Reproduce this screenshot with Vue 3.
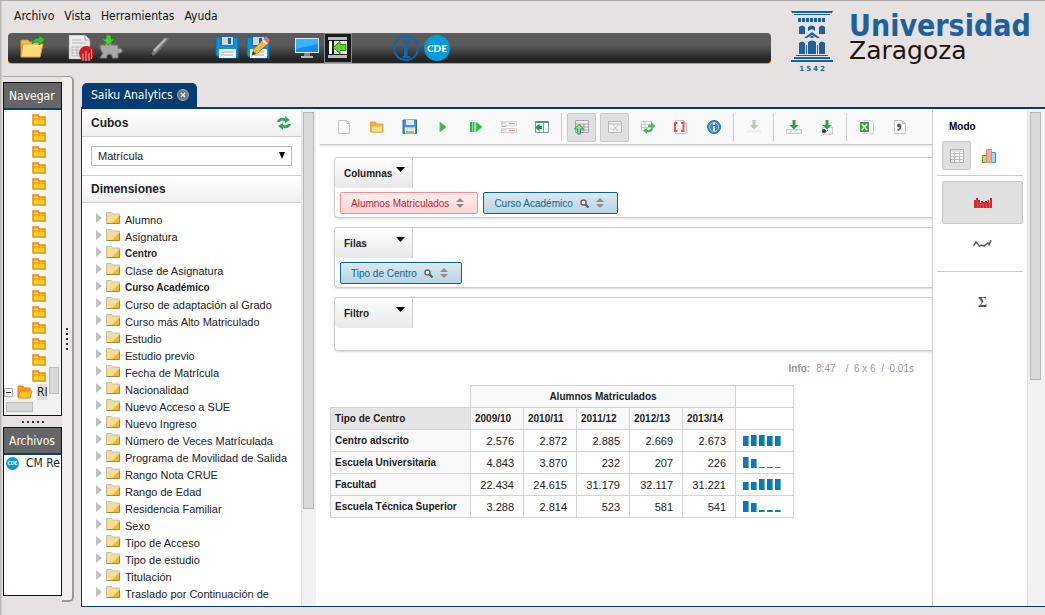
<script setup>
import { ref } from "vue";

const menus = ["Archivo", "Vista", "Herramientas", "Ayuda"];

// markup of every icon, drawn inside the viewBox given in each button
const floppy = `<path d="M2 2h20a1 1 0 0 1 1 1v20H4l-3-3V3z" fill="#0d93dc" stroke="#0569aa"/><path d="M5 2h14v9H5z" fill="#2f6f9c"/><path d="M7 2h11v8H7z" fill="#cfd6dc"/><path d="M13 3h3v6h-3z" fill="#275f8c"/><path d="M4 14h17v9H4z" fill="#f6f6f6"/><path d="M6 17h12M6 20h12" stroke="#aaa"/>`;
const sheet = `<path d="M2.500 1.500h8l3 3v10h-11z" fill="#fdfdfd" stroke="#c4c4c4"/><path d="M10.500 1.500v3h3" fill="none" stroke="#c4c4c4"/>`;
const down = `<path d="M6.500 1h3v5h3L8 10.500 3.500 6h3z" fill="#2f9e4b"/>`;

const icons = {
  open: `<path d="M1 21V5h7l2 2h9v4" fill="#f0c050" stroke="#c8932a"/><path d="M1 22 3 9h20l-3 13z" fill="#fbdc7d" stroke="#d9a63c"/><path d="M12 9c1-5 4-6 7-6V0l6 5-6 5V7c-3 0-5 0-7 2z" fill="#35c335" stroke="#0f7d16" stroke-width=".7"/>`,
  report: `<path d="M1 0h16l5 5v19H1z" fill="#ececec" stroke="#999" stroke-width=".6"/><path d="M17 0v5h5" fill="#fff" stroke="#999"/><path d="M4 5h9M4 8h14M4 12h14M4 15h14M4 18h14M4 21h14M4 12v9M9 12v9" stroke="#b5b5b5"/><circle cx="18.500" cy="18.500" r="7.500" fill="#cf1b1f"/><path d="M15 26v-7M18 26V16M21 26v-8M23.500 24V14" stroke="#e9e0e0" stroke-width=".8"/>`,
  puzzle: `<path d="M1 10h6c-2-4 7-4 5 0h7v4c4-3 7 5 0 4v5h-6c2-5-7-5-5 0H1l3-5c-2-2-3-4-3-8z" fill="#a8a8a8" stroke="#777"/><path d="M7 0h5v4h4l-6.500 6L3 4h4z" fill="#4bd22d" stroke="#16860e" stroke-width=".8"/>`,
  pencil: `<path d="M3 23 6 15 18 3q3-2 4 1L10 18z" fill="#777"/><path d="M6 15 18 3l2 1L8 17z" fill="#b5b5b5"/><path d="M3 23l1-4 2 2z" fill="#222"/>`,
  save: floppy,
  saveAs: floppy + `<path d="m6 20 2-6L19 3l4 4-11 11z" fill="#f5b83a" stroke="#b57816" stroke-width=".7"/><path d="m17 5 3-4 4 4-3 4z" fill="#ef6c6c"/><path d="m17 5 4 4" stroke="#dcefdc" stroke-width="2"/><path d="m6 20 1-4 3 3z" fill="#4a3017"/>`,
  monitor: `<path d="M1 3h24v15H1z" fill="#d4e6f4"/><path d="M2 4h22v13H2z" fill="#188bf0"/><path d="M2 4h22v5L2 14z" fill="#36b2ff"/><path d="M10 18h6v3h-6z" fill="#888"/><path d="M7 21h12v2H7z" fill="#bbb"/>`,
  panel: `<path d="M3 2h19v3H3zM3 20h19v3H3z" fill="#bbb"/><path d="M4 6h3v13H4z" fill="#fff"/><path d="M9 6h13v13H9z" fill="#f1f1f1"/><path d="m8 12.500 7-6v3h6v6h-6v3z" fill="#69d021" stroke="#2d8a10"/>`,
  info: `<circle cx="13" cy="13" r="12" fill="none" stroke="#0a6bb5" stroke-width="2"/><circle cx="13" cy="7" r="2.800" fill="#0a6bb5"/><path d="M9.500 11h5v10H17v2H9.500v-2H11v-8H9.500z" fill="#0a6bb5"/>`,
  cde: `<circle cx="13" cy="13" r="13" fill="#069bdb"/><text x="13" y="16.500" text-anchor="middle" font-family="Lato, sans-serif" font-size="10" font-weight="900" fill="#fff">CDE</text>`,

  blank: sheet,
  folder: `<path d="M1.500 13V3h5l1.500 2h6v8z" fill="#f6b13a" stroke="#eaa43a"/><path d="M3 7h10.500v6H2z" fill="#fde08a" stroke="#f0b040"/>`,
  disk: `<path d="M1 1h13.500v13.500H1z" fill="#4f8fd8" stroke="#2e68ad"/><path d="M4 1h8v5H4z" fill="#dbe9f8"/><path d="M3 8.500h10v6H3z" fill="#fff"/><path d="M4 10h8" stroke="#bbb"/><path d="M4 13h8" stroke="#8ccf62" stroke-width="2"/>`,
  run: `<path d="M5 3v10l6-5z" fill="#2fb550" stroke="#57cb70"/>`,
  runAll: `<path d="M3 3v10M5.500 3v10" stroke="#2fb550" stroke-width="2"/><path d="M8 3v10l6-5z" fill="#2fb550" stroke="#57cb70"/>`,
  fields: `<path d="M.5 2.500h15v4H.500zM.5 9.500h15v4H.500z" fill="#f5f5f5" stroke="#d5d5d5"/><path d="M1 4h4M1 7.500h4M1 11h4" stroke="#bbb"/><path d="M8 4.500h6" stroke="#82b5dc"/><path d="M8 11.500h6" stroke="#ee8c8c"/>`,
  toggle: `<path d="M1.500 2.500h13v11h-13z" fill="#fff" stroke="#6a9cc8"/><path d="M1.500 3h13" stroke="#4f88c0" stroke-width="2"/><path d="M9.500 3v10" stroke="#6a9cc8"/><path d="M1 8.500 5.500 4.500v2.500h2.500v3H5.500v2.500z" fill="#229a46"/>`,
  hideParents: `<path d="M1.500 1.500h13v12h-13zM1.500 5h13M1.500 8h13M1.500 11h13M6 5v9M10 5v9" fill="#eee" stroke="#a5a5a5"/><path d="M3.500 15V10H.500L5 5.500 9.500 10h-3v5z" fill="#9bd7ac" stroke="#2f9a50"/>`,
  nonEmpty: `<path d="M1.500 2.500h13v11h-13z" fill="#f3f3f3" stroke="#b5b5b5"/><path d="M1.500 5h13" stroke="#b5b5b5"/><path d="m6 6 5 6M11 6l-5 6" stroke="#bbb"/>`,
  swap: `<path d="M1.500 2.500h10v9h-10zM1.500 5.500h10M1.500 8.500h10M5 2.500v9" fill="#f4f4f4" stroke="#ccc"/><path d="M8 6h3V3l4.500 4L13 9c0 4-3 5-6 4v2l-4-3.500L7 9v2c3 0 4-1 4-3H8z" fill="#45b865"/>`,
  mdx: sheet + `<path d="M4.500 4H2v8h2.500M8 4h2.500v8H8" fill="none" stroke="#f05252" stroke-width="2"/>`,
  about: `<circle cx="8" cy="8" r="6.500" fill="#3a87ca" stroke="#2a6fae"/><circle cx="8" cy="8" r="4.500" fill="none" stroke="#9cc7ec"/><path d="M8 4v2M8 7v5" stroke="#fff" stroke-width="2"/>`,
  drill: `<g opacity=".4">${down}<path d="M1 11h14v3H1z" fill="#e2e2e2"/></g>`,
  drillDown: `<path d="M.5 10.500h15v4H.500zM5 10.500v4M10 10.500v4" fill="#f2f2f2" stroke="#ccc"/>` + down,
  drillCsv: `<path d="M3.500 8.500h10v7h-10z" fill="#fafafa" stroke="#ccc"/><circle cx="5" cy="12" r="2" fill="#333"/><path d="m5 14 4-3" stroke="#555"/>` + down,
  xls: `<path d="M5.500 1.500h7l2 2v11h-9z" fill="#fff" stroke="#ccc"/><path d="M1 3h9v10H1z" fill="#3d9b4b"/><path d="m3 5 5 6M8 5l-5 6" stroke="#e6f5e6" stroke-width="1.500"/>`,
  csv: sheet + `<circle cx="7" cy="6.500" r="2" fill="#555"/><path d="M8.500 6.500q1 3-3 5" fill="none" stroke="#555" stroke-width="1.500"/>`,

  table: `<path d="M1.500 1.500h13v13h-13z" fill="#fff" stroke="#b0b0b0"/><path d="M1 3h14M2 5.500h12M2 8.500h12M2 11.500h12M5.500 4v10M10.500 4v10" stroke="#bdbdbd"/>`,
  chart: `<path d="M1.500 7.500h4v7h-4z" fill="#b8e06a" stroke="#5fa51b"/><path d="M10.500 4.500h4v10h-4z" fill="#9bdcf7" stroke="#28a0d5"/><path d="M5.500 1.500h5v13h-5z" fill="#f9aaa5" stroke="#ec7f78"/>`,
};

const mainTools = [
  { icons: ["open"] },
  { icons: ["report", "puzzle"] },
  { icons: ["pencil"] },
  { icons: ["save", "saveAs"], wide: true },
  { icons: ["monitor", "panel"] },
  { icons: ["info", "cde"], wide: true },
];

const queryTools = [
  ["blank", "folder", "disk", "run", "runAll", "fields", "toggle"],
  ["hideParents", "nonEmpty", "swap", "mdx", "about"],
  ["drill"],
  ["drillDown", "drillCsv"],
  ["xls", "csv"],
];
const pressed = ref(["hideParents", "nonEmpty"]);

function toggle(name) {
  if (pressed.value.includes(name)) {
    pressed.value = pressed.value.filter((n) => n !== name);
  } else {
    pressed.value.push(name);
  }
}

const cube = ref("Matrícula");
const mode = ref("table");

const dimensions = [
  "Alumno", "Asignatura", "Centro", "Clase de Asignatura", "Curso Académico",
  "Curso de adaptación al Grado", "Curso más Alto Matriculado", "Estudio",
  "Estudio previo", "Fecha de Matrícula", "Nacionalidad", "Nuevo Acceso a SUE",
  "Nuevo Ingreso", "Número de Veces Matrículada", "Programa de Movilidad de Salida",
  "Rango Nota CRUE", "Rango de Edad", "Residencia Familiar", "Sexo",
  "Tipo de Acceso", "Tipo de estudio", "Titulación", "Traslado por Continuación de",
];
const used = ["Centro", "Curso Académico"];

const axes = [
  {
    name: "Columnas",
    chips: [
      { text: "Alumnos Matriculados", measure: true },
      { text: "Curso Académico" },
    ],
  },
  { name: "Filas", chips: [{ text: "Tipo de Centro" }] },
  { name: "Filtro", chips: [] },
];

const years = ["2009/10", "2010/11", "2011/12", "2012/13", "2013/14"];
const rows = [
  { name: "Centro adscrito", values: [2576, 2872, 2885, 2669, 2673] },
  { name: "Escuela Universitaria", values: [4843, 3870, 232, 207, 226] },
  { name: "Facultad", values: [22434, 24615, 31179, 32117, 31221] },
  { name: "Escuela Técnica Superior", values: [3288, 2814, 523, 581, 541] },
];

function format(n) {
  return String(n).replace(/\B(?=(\d{3})+$)/g, ".");
}

function bars(values) {
  const max = Math.max(...values);
  return values.map((v) => Math.max(1, Math.round((v / max) * 11)));
}
</script>

<template>
  <div class="page">
    <header class="top">
      <div class="top-left">
        <nav class="menu">
          <button v-for="m in menus" :key="m">{{ m }}</button>
        </nav>
        <div class="main-tools">
          <div v-for="(g, i) in mainTools" :key="i" class="tool-group" :class="{ wide: g.wide }">
            <button v-for="n in g.icons" :key="n" :class="{ on: n === 'panel' }" :aria-label="n">
              <svg width="26" height="26" viewBox="0 0 26 26" v-html="icons[n]"></svg>
            </button>
          </div>
        </div>
      </div>
      <div class="brand">
        <div class="seal">
          <svg width="42" height="52" viewBox="0 0 42 52" fill="#1c609e">
            <path d="M0 0h42l-1 2H1zM3 3h36v1H3z" />
            <path d="M7 7h3v4H7zM11 7h3v4h-3zM15 7h3v4h-3zM19 7h3v4h-3zM23 7h3v4h-3zM27 7h3v4h-3zM31 7h3v4h-3z" />
            <path d="M8 23v-7q3-3 6 0v7zM17 20v-4q4-3 7 0v4l-3-2zM28 23v-7q3-3 6 0v7z" />
            <path d="m13 27 8-6 8 6h-3l-5-3-5 3zM19.500 25h3v2h-3z" />
            <path d="M8 43V32q3-3 6 0v11zM17 43V31q4-3 8 0v12zM28 43V32q3-3 6 0v11z" />
            <path d="M15 43V34h1v9zM26 43V34h1v9z" />
            <path d="M5 44h32v1H5zM3 46h36v2H3zM0 49h42v2H0z" />
          </svg>
          <span class="year"><i v-for="d in '1542'" :key="d">{{ d }}</i></span>
        </div>
        <div class="brand-name">
          <strong>Universidad</strong>
          <span>Zaragoza</span>
        </div>
      </div>
    </header>

    <div class="body">
      <aside class="side">
        <div class="side-boxes">
          <section class="box">
            <h2>Navegar</h2>
            <div class="repo">
              <ul>
                <li v-for="n in 17" :key="n">
                  <svg width="14" height="14" viewBox="0 0 14 14">
                    <path d="M1 12V2h5l1 2h6v8z" fill="#ffd51c" stroke="#f58413" stroke-width="1.500" />
                    <path d="M2 6h10" stroke="#f58413" />
                  </svg>
                </li>
                <li class="last">
                  <svg width="9" height="9" viewBox="0 0 9 9">
                    <path d="M.5.500h8v8h-8z" fill="#fff" stroke="#aaa" />
                    <path d="M2 4.500h5" stroke="#333" />
                  </svg>
                  <svg width="16" height="14" viewBox="0 0 16 14">
                    <path d="M1 12V1h5l1 2h6v3" fill="#f89a1e" stroke="#ee7a10" />
                    <path d="m1 13 2-7h12l-2 7z" fill="#ffc829" stroke="#ee7a10" />
                  </svg>
                  <span>RI</span>
                </li>
              </ul>
              <div class="track"><i></i></div>
            </div>
            <div class="hscroll"><i></i></div>
          </section>
          <div class="grip"><i v-for="n in 5" :key="n"></i></div>
          <section class="box files">
            <h2>Archivos</h2>
            <a href="#">
              <svg width="13" height="13" viewBox="0 0 26 26" v-html="icons.cde"></svg>
              CM Re
            </a>
          </section>
        </div>
        <div class="splitter"><i v-for="n in 5" :key="n"></i></div>
      </aside>

      <main class="main">
        <div class="tab">
          Saiku Analytics
          <button aria-label="Cerrar">
            <svg width="12" height="12" viewBox="0 0 12 12">
              <circle cx="6" cy="6" r="5.500" fill="#6f7884" stroke="#a2a9b4" />
              <path d="m4 4 4 4M8 4 4 8" stroke="#fff" stroke-width="1.500" />
            </svg>
          </button>
        </div>

        <div class="panel">
          <div class="cubes">
            <h3>
              <label for="cube">Cubos</label>
              <button aria-label="Actualizar">
                <svg width="16" height="14" viewBox="0 0 16 14" fill="#35a862">
                  <path d="M1 6q1-5 8-4V0l5 4-5 3V5Q5 4 4 6z" />
                  <path d="M15 8q-1 5-8 4v2l-5-4 5-3v2q4 1 5-1z" />
                </svg>
              </button>
            </h3>
            <div class="cube-select">
              <select id="cube" v-model="cube">
                <option>Matrícula</option>
              </select>
              <svg width="6" height="7" viewBox="0 0 6 7"><path d="M0 0h6L3 7z" /></svg>
            </div>
            <h3>Dimensiones</h3>
            <ul class="tree">
              <li v-for="d in dimensions" :key="d" :class="{ used: used.includes(d) }">
                <svg width="6" height="10" viewBox="0 0 6 10"><path d="M0 0v10l6-5z" fill="#c0c0c0" /></svg>
                <svg width="14" height="12" viewBox="0 0 14 12">
                  <path d="M.5 11V.500h5l1 1.500h7v9z" fill="#e8dcb8" stroke="#cdbf95" />
                  <path d="M1 4h12v7H1z" fill="#f9dd8c" />
                  <path d="M6 11 13 4v7z" fill="#f3b62e" />
                  <path d="M.5 11.500h13V4" fill="none" stroke="#a98733" />
                </svg>
                <span>{{ d }}</span>
              </li>
            </ul>
          </div>
          <div class="scroll cubes-scroll"><i></i></div>

          <div class="work">
            <div class="query-tools">
              <template v-for="(g, i) in queryTools" :key="i">
                <span v-if="i" class="sep"></span>
                <button
                  v-for="n in g"
                  :key="n"
                  :class="{ on: pressed.includes(n) }"
                  :aria-label="n"
                  @click="toggle(n)"
                >
                  <svg width="16" height="16" viewBox="0 0 16 16" v-html="icons[n]"></svg>
                </button>
              </template>
            </div>

            <div class="axes">
              <section v-for="a in axes" :key="a.name" class="axis">
                <button class="axis-tab">
                  {{ a.name }}
                  <svg width="9" height="5" viewBox="0 0 9 5"><path d="M0 0h9L4.500 5z" /></svg>
                </button>
                <div class="chips">
                  <button v-for="c in a.chips" :key="c.text" class="chip" :class="{ measure: c.measure }">
                    {{ c.text }}
                    <svg v-if="!c.measure" width="9" height="9" viewBox="0 0 9 9">
                      <circle cx="3.500" cy="3.500" r="2.500" fill="#fff" stroke="#666" stroke-width="1.500" />
                      <path d="m5.500 5.500 3 3" stroke="#555" stroke-width="2" />
                    </svg>
                    <svg width="8" height="10" viewBox="0 0 8 10" fill="#8c8c8c"><path d="M0 4h8L4 0zM0 6h8l-4 4z" /></svg>
                  </button>
                </div>
              </section>
            </div>

            <p class="info"><b>Info:</b><span>8:47</span><span>/&nbsp; 6 x 6 &nbsp;/&nbsp; 0.01s</span></p>

            <table>
              <colgroup>
                <col class="col-name">
                <col v-for="y in years" :key="y">
                <col class="col-spark">
              </colgroup>
              <thead>
                <tr>
                  <td class="none"></td>
                  <th colspan="5" class="measure-name">Alumnos Matriculados</th>
                  <td></td>
                </tr>
                <tr>
                  <th class="corner">Tipo de Centro</th>
                  <th v-for="y in years" :key="y">{{ y }}</th>
                  <td></td>
                </tr>
              </thead>
              <tbody>
                <tr v-for="r in rows" :key="r.name">
                  <th>{{ r.name }}</th>
                  <td v-for="(v, i) in r.values" :key="i">{{ format(v) }}</td>
                  <td class="spark">
                    <div><i v-for="(h, i) in bars(r.values)" :key="i" :style="{ height: h + 'px' }"></i></div>
                  </td>
                </tr>
              </tbody>
            </table>
          </div>

          <div class="modes">
            <h4>Modo</h4>
            <div class="mode-row">
              <button :class="{ on: mode === 'table' }" aria-label="Tabla" @click="mode = 'table'">
                <svg width="16" height="16" viewBox="0 0 16 16" v-html="icons.table"></svg>
              </button>
              <button :class="{ on: mode === 'chart' }" aria-label="Gráfico" @click="mode = 'chart'">
                <svg width="16" height="16" viewBox="0 0 16 16" v-html="icons.chart"></svg>
              </button>
            </div>
            <hr>
            <div class="mode-list">
              <button class="on" aria-label="Barras">
                <svg width="18" height="14" viewBox="0 0 18 14">
                  <path d="M0 12V4h2V2h2v2h2v3h1V5h2v1h2V5h2v1h1V4h1v3h1V2h2v10z" fill="#d2282b" />
                  <path d="M3.500 6v6M6.500 8v4M9.500 8v4M12.500 8v4M15.500 8v4" stroke="#ea7777" stroke-width=".6" />
                </svg>
              </button>
              <button aria-label="Líneas">
                <svg width="19" height="8" viewBox="0 0 19 8">
                  <path d="m.5 6 2.500-4 3.500 4 2.500-1 2 1 4-3 1 2 2-5" fill="none" stroke="#5c5c5c" stroke-width="1.500" />
                </svg>
              </button>
            </div>
            <hr>
            <button class="sigma" aria-label="Estadísticas">Σ</button>
          </div>
          <div class="scroll main-scroll"><i></i></div>
        </div>
      </main>
    </div>
  </div>
</template>

<style>
body {
  background: #e5e2e1;
}
</style>

<style scoped>
* {
  box-sizing: border-box;
}

.page {
  min-height: 100vh;
  overflow: hidden;
  padding: 0 0 7px 3px;
  border-top: 1px solid #aaa;
  background: linear-gradient(90deg, #b9b9b9 1px, #e5e2e1 2px);
  font: 11px "Liberation Sans", Arial, sans-serif;
  color: #222;
}

button {
  padding: 0;
  border: none;
  background: none;
  font: inherit;
  color: inherit;
}

svg {
  display: block;
  flex: none;
}

ul,
h2,
h3,
h4,
p {
  margin: 0;
  padding: 0;
  list-style: none;
}

/* header */
.top {
  display: flex;
  height: 75px;
  gap: 20px;
}

.top-left {
  flex: 1;
  padding: 7px 0 0 5px;
}

.menu {
  display: flex;
  gap: 10px;
  height: 25px;
  padding-left: 6px;
  font: 12px/16px "DejaVu Sans Condensed", Tahoma, sans-serif;
  color: #111;
}

.menu button {
  height: 16px;
}

.main-tools {
  display: flex;
  align-items: center;
  gap: 20px;
  height: 31px;
  padding-left: 11px;
  border-bottom: 1px solid #ef9a26;
  border-radius: 4px;
  background: linear-gradient(#5a5a5a 40%, #262626 85%);
}

.tool-group {
  display: flex;
  gap: 3px;
}

.tool-group.wide {
  margin-left: 20px;
}

.tool-group button {
  display: grid;
  place-items: center;
  width: 28px;
  height: 30px;
}

.tool-group .on {
  border: 1px solid #888;
  background: #1b1b1b;
}

.brand {
  display: flex;
  gap: 16px;
  width: 254px;
  padding: 10px 0 0;
}

.year {
  display: flex;
  justify-content: center;
  gap: 2px;
  font: bold 7px/12px "DejaVu Sans", sans-serif;
  color: #1c609e;
}

.year i {
  font-style: normal;
}

.brand-name {
  display: flex;
  flex-direction: column;
  font-family: "DejaVu Sans", Verdana, sans-serif;
}

.brand-name strong {
  font: bold 30px/30px "DejaVu Sans Condensed", sans-serif;
  color: #1c609e;
}

.brand-name span {
  font-size: 25px;
  line-height: 20px;
  color: #24120e;
}

/* left side */
.body {
  display: flex;
  gap: 7px;
}

.side {
  display: flex;
  height: 526px;
}

.side-boxes {
  display: flex;
  flex-direction: column;
  width: 59px;
  padding: 5px 0 6px;
  border-top: 1px solid #aaa;
}

.box {
  overflow: hidden;
  border: 1px solid #111;
  background: #fff;
}

.box h2 {
  height: 27px;
  padding-left: 5px;
  border-bottom: 2px solid #0b3f74;
  background: #666;
  font: 12px/26px "DejaVu Sans Condensed", Tahoma, sans-serif;
  color: #fff;
}

.files {
  flex: 1;
}

.files a {
  display: flex;
  align-items: center;
  gap: 7px;
  padding: 0 2px;
  white-space: nowrap;
  font: 12px/16px "DejaVu Sans Condensed", Tahoma, sans-serif;
  color: #222;
  text-decoration: none;
}

.repo {
  display: flex;
}

.repo ul {
  flex: 1;
  overflow: hidden;
  padding-top: 2px;
}

.repo li {
  display: flex;
  align-items: center;
  height: 16px;
  padding-left: 28px;
}

.repo .last {
  gap: 4px;
  padding-left: 0;
  font: 12px/16px "DejaVu Sans Condensed", Tahoma, sans-serif;
}

.last span {
  background: #ddd;
}

.track {
  display: flex;
  justify-content: center;
  align-items: flex-end;
  width: 14px;
  padding-bottom: 6px;
  background: #f1f1f1;
}

.track i {
  width: 10px;
  height: 27px;
  border: 1px solid #bbb;
  background: #d9d9d9;
}

.hscroll {
  padding: 2px 2px 3px;
  background: #f1f1f1;
}

.hscroll i {
  display: block;
  width: 27px;
  height: 10px;
  border: 1px solid #bbb;
  background: #d9d9d9;
}

.grip {
  display: flex;
  justify-content: center;
  align-items: center;
  gap: 3px;
  height: 11px;
}

.grip i,
.splitter i {
  width: 2px;
  height: 2px;
  background: #333;
}

.splitter {
  display: flex;
  flex-direction: column;
  justify-content: center;
  align-items: center;
  gap: 3px;
  width: 12px;
  border: solid #999;
  border-width: 1px 2px 2px 0;
  border-radius: 0 5px 5px 0;
  background: #f1efee;
}

/* tab and panel */
.main {
  flex: 1;
  min-width: 0;
  padding-top: 7px;
}

.tab {
  display: inline-flex;
  align-items: center;
  gap: 4px;
  height: 24px;
  margin-left: 1px;
  padding: 0 8px 0 9px;
  border-radius: 5px 5px 0 0;
  background: #033c73;
  font: 12px/24px "DejaVu Sans Condensed", Tahoma, sans-serif;
  color: #fff;
  vertical-align: top;
}

.panel {
  display: flex;
  padding-top: 1px;
  border-top: 2px solid #033c73;
  border-left: 1px solid #033c73;
  border-bottom: 1px solid #033c73;
  background: #fff;
}

.cubes {
  width: 219px;
}

h3 {
  display: flex;
  justify-content: space-between;
  align-items: center;
  height: 27px;
  padding: 0 9px;
  border-bottom: 1px solid #ccc;
  background: linear-gradient(#fff, #f0f0f0);
  font-size: 12px;
}

.cube-select {
  position: relative;
  padding: 9px;
  border-bottom: 1px solid #ccc;
}

.cube-select select {
  display: block;
  width: 100%;
  height: 20px;
  padding: 0 6px;
  appearance: none;
  border: 1px solid #bbb;
  border-radius: 0;
  background: #fff;
  font: 11px "Liberation Sans", Arial, sans-serif;
  color: #222;
}

.cube-select svg {
  position: absolute;
  right: 16px;
  top: 15px;
  pointer-events: none;
}

.tree {
  padding: 8px 0 4px 14px;
}

.tree li {
  display: flex;
  align-items: center;
  height: 17px;
  white-space: nowrap;
}

.tree svg {
  margin-bottom: 4px;
}

.tree svg:nth-child(2) {
  margin: 0 5px 4px 4px;
}

.tree .used {
  font-size: 10px;
  font-weight: bold;
}

.scroll {
  background: #f1f1f1;
  border-left: 1px solid #ddd;
}

.scroll i {
  display: block;
  width: 11px;
  margin: 2px 1px;
  border: 1px solid #b5b5b5;
  background: #d9d9d9;
}

.cubes-scroll {
  width: 15px;
}

.cubes-scroll i {
  height: 80%;
}

.main-scroll {
  width: 18px;
}

.main-scroll i {
  height: 54%;
  margin-left: 2px;
}

/* workspace */
.work {
  flex: 1;
  min-width: 0;
  overflow: hidden;
  padding-left: 4px;
}

.query-tools {
  display: flex;
  align-items: center;
  gap: 4px;
  height: 35px;
  padding-left: 9px;
  border-bottom: 1px solid #ccc;
  background: #f9f9f9;
  box-shadow: 0 1px 2px #ddd;
}

.query-tools button,
.mode-row button {
  display: grid;
  place-items: center;
  flex: none;
  width: 29px;
  height: 29px;
  border: 1px solid transparent;
  border-radius: 2px;
}

.query-tools .on,
.modes .on {
  border: 1px solid #c8c8c8;
  background: #e0e0e0;
}

.sep {
  width: 1px;
  height: 28px;
  margin: 0 1px;
  background: #ccc;
}

.axes {
  display: flex;
  flex-direction: column;
  gap: 9px;
  padding: 12px 0 0 14px;
}

.axis {
  display: flex;
  flex-direction: column;
  align-items: flex-start;
  min-height: 54px;
  border: 1px solid #ccc;
  border-right: none;
  border-radius: 4px 0 0 4px;
  box-shadow: 0 1px 2px #ddd;
}

.axis-tab {
  display: flex;
  justify-content: space-between;
  width: 78px;
  height: 30px;
  padding: 9px 7px 0 9px;
  border-right: 1px solid #ccc;
  border-radius: 4px 0 0 4px;
  background: linear-gradient(#fff, #e8e8e8);
  font-size: 10px;
  font-weight: bold;
  line-height: 13px;
}

.chips {
  display: flex;
  gap: 5px;
  padding-left: 5px;
}

.chip {
  display: flex;
  align-items: center;
  gap: 7px;
  height: 22px;
  margin: 4px 0 3px;
  padding: 0 13px 0 10px;
  border: 1px solid #0a6490;
  border-radius: 2px;
  background: linear-gradient(#dce9f0, #b8d4e2);
  font-size: 10px;
  color: #0a6490;
}

.chip.measure {
  border-color: #f58f8f;
  background: linear-gradient(#fff0f0, #ffd4d4);
  color: #b52632;
}

.info {
  display: flex;
  justify-content: flex-end;
  gap: 6px;
  padding: 12px 18px 10px 0;
  font-size: 10px;
  line-height: 12px;
  color: #999;
}

.info span + span {
  margin-left: 4px;
}

table {
  width: 464px;
  margin-left: 10px;
  table-layout: fixed;
  border-collapse: collapse;
}

.col-name {
  width: 140px;
}

.col-spark {
  width: 58px;
}

th,
td {
  height: 22px;
  padding: 0 9px 0 4px;
  border: 1px solid #d3d3d3;
  text-align: right;
}

th {
  background: #f9f9f9;
  font-size: 10px;
  text-align: left;
  white-space: nowrap;
}

.none {
  border: none;
}

.measure-name {
  text-align: center;
  padding: 0 4px;
}

.corner {
  background: #e5e5e5;
}

.spark div {
  display: flex;
  align-items: flex-end;
  gap: 2px;
  height: 11px;
  margin-left: 3px;
}

.spark i {
  flex: none;
  width: 6px;
  background: #0a7abb;
  border-right: 1px solid #5fb0dc;
}

/* display mode */
.modes {
  width: 95px;
  padding: 11px 4px 0;
  border-left: 1px solid #ccc;
}

.modes h4 {
  padding-left: 12px;
  font-size: 10px;
  line-height: 12px;
  color: #000;
}

.mode-row {
  display: flex;
  gap: 3px;
  padding: 8px 0 5px 5px;
}

.modes hr {
  margin: 0;
  border: none;
  border-top: 1px solid #ccc;
}

.mode-list {
  padding: 5px 0 8px 5px;
}

.mode-list button {
  display: grid;
  place-items: center;
  width: 100%;
  height: 43px;
  border-radius: 2px;
}

.mode-list button + button {
  height: 39px;
}

.sigma {
  width: 100%;
  padding: 22px 0 0 5px;
  font: bold 14px/18px "Liberation Serif", serif;
  color: #555;
}
</style>
